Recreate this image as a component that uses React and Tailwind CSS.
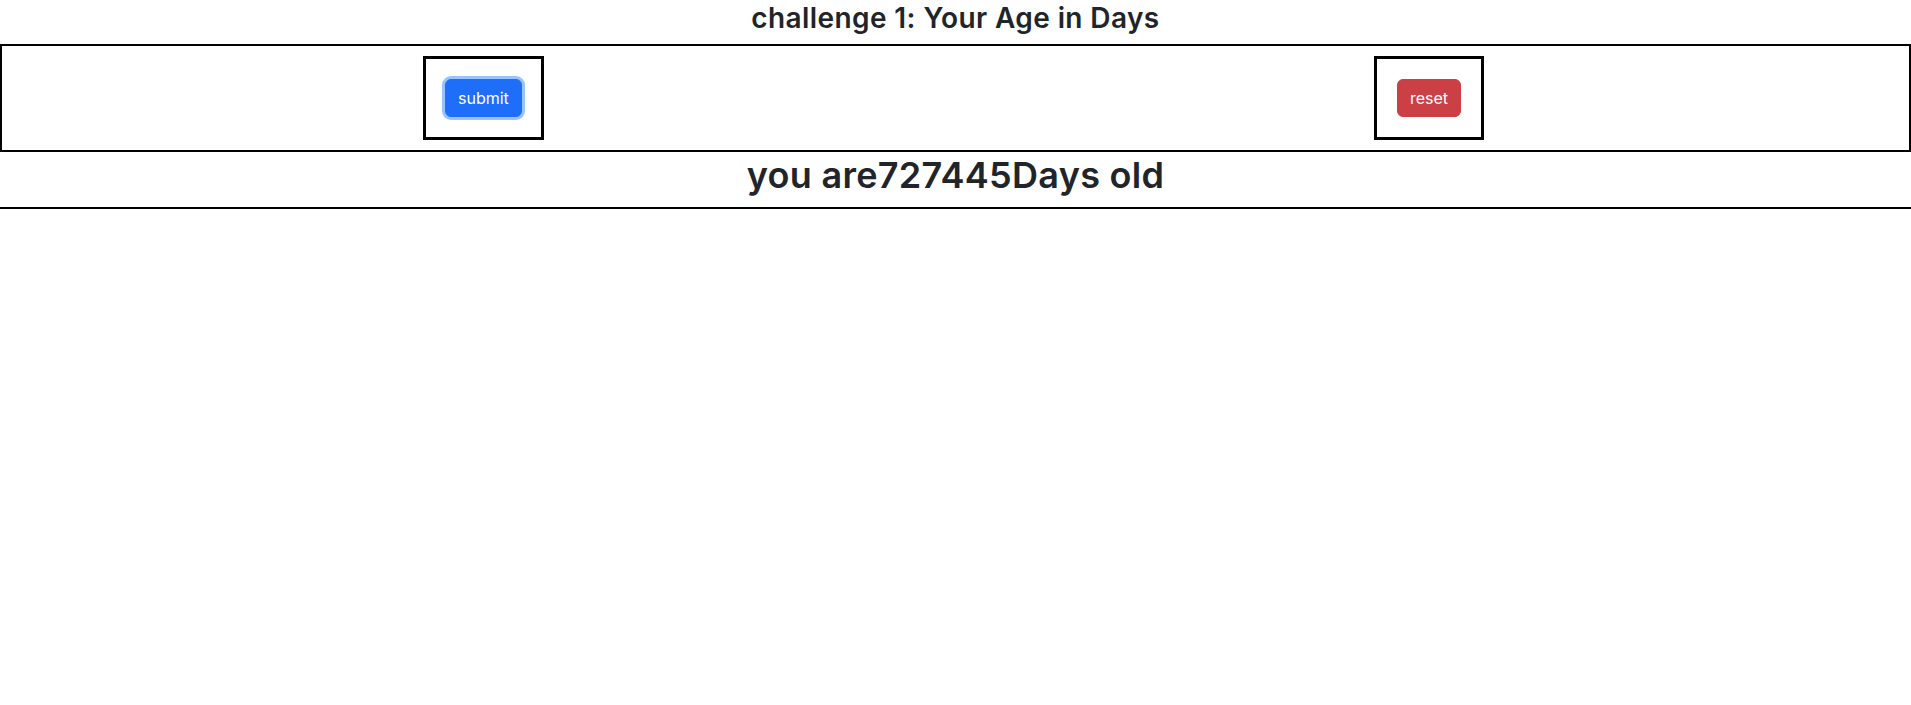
export default function App() {
  return (
    <div
      className="w-full bg-white text-[#212529]"
      style={{ fontFamily: "Inter, 'Noto Sans', 'Liberation Sans', sans-serif" }}
    >
      <h3 className="text-center text-[28px] font-semibold leading-[34px] tracking-[0.4px] pt-[1px] pb-[9px]">
        challenge 1: Your Age in Days
      </h3>
      <div className="flex flex-row flex-wrap justify-around border-2 border-black py-[10px] pl-[6px] pr-[10px]">
        <div className="flex items-center border-[3px] border-black px-[19px] py-[20px]">
          <button className="rounded-[6px] border border-[#1e6ef9] bg-[#1e6ef9] px-[12px] py-[6px] text-[16px] leading-[24px] text-white shadow-[0_0_0_3px_rgba(70,145,253,0.55)]">
            submit
          </button>
        </div>
        <div className="flex items-center border-[3px] border-black px-[20px] py-[20px]">
          <button className="rounded-[6px] border border-[#ca4044] bg-[#ca4044] px-[12px] py-[6px] text-[16px] leading-[24px] text-white">
            reset
          </button>
        </div>
      </div>
      <div className="border-b-2 border-black pt-[2px] pb-[10px] text-center">
        <h2 className="text-[36px] font-semibold leading-[43px] tracking-[0.3px]">you are727445Days old</h2>
      </div>
    </div>
  );
}
